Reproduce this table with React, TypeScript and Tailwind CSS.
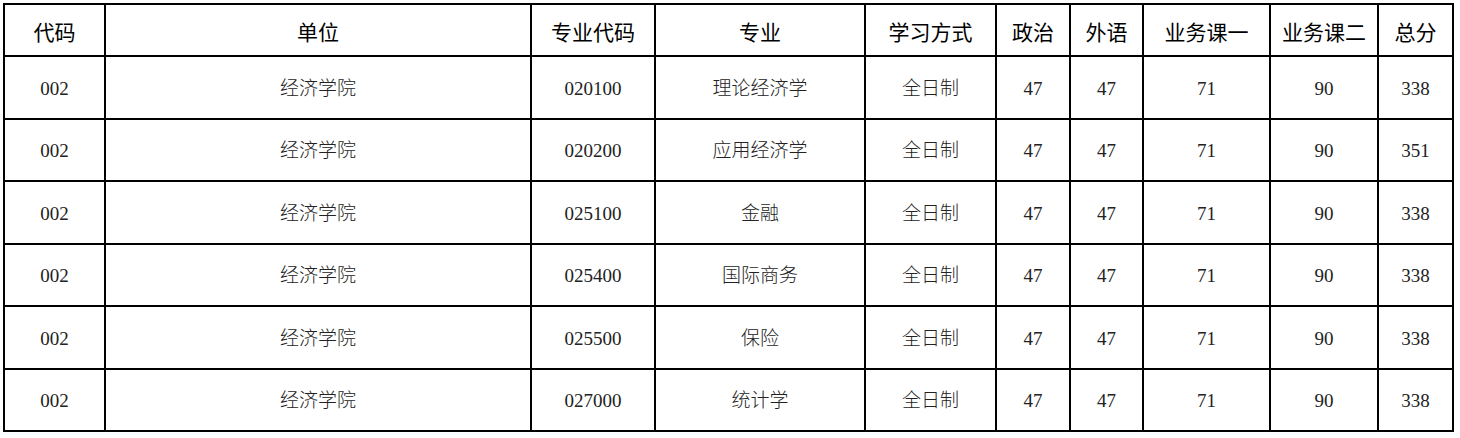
import React from 'react'

// column widths, measured between grid line centres
const cols = [101, 426, 124, 210, 131, 74, 73, 127, 108, 75]

const headers = ['代码', '单位', '专业代码', '专业', '学习方式', '政治', '外语', '业务课一', '业务课二', '总分']

type Row = {
  code: string
  unit: string
  majorCode: string
  major: string
  mode: string
  politics: number
  language: number
  course1: number
  course2: number
  total: number
}

const rows: Row[] = [
  { code: '002', unit: '经济学院', majorCode: '020100', major: '理论经济学', mode: '全日制', politics: 47, language: 47, course1: 71, course2: 90, total: 338 },
  { code: '002', unit: '经济学院', majorCode: '020200', major: '应用经济学', mode: '全日制', politics: 47, language: 47, course1: 71, course2: 90, total: 351 },
  { code: '002', unit: '经济学院', majorCode: '025100', major: '金融', mode: '全日制', politics: 47, language: 47, course1: 71, course2: 90, total: 338 },
  { code: '002', unit: '经济学院', majorCode: '025400', major: '国际商务', mode: '全日制', politics: 47, language: 47, course1: 71, course2: 90, total: 338 },
  { code: '002', unit: '经济学院', majorCode: '025500', major: '保险', mode: '全日制', politics: 47, language: 47, course1: 71, course2: 90, total: 338 },
  { code: '002', unit: '经济学院', majorCode: '027000', major: '统计学', mode: '全日制', politics: 47, language: 47, course1: 71, course2: 90, total: 338 },
]

const rowHeights = ['h-[63px]', 'h-[62px]', 'h-[63px]', 'h-[62px]', 'h-[63px]', 'h-[62px]']

export default function App() {
  return (
    <div className="w-[1460px] h-[438px] bg-white pt-[3px] pl-[3px]">
      <table className="w-[1451px] table-fixed border-collapse text-black">
        <colgroup>
          {cols.map((w, i) => (
            <col key={i} style={{ width: w }} />
          ))}
        </colgroup>
        <thead>
          <tr className="h-[52px]">
            {headers.map((h) => (
              <th
                key={h}
                className="border-2 border-black p-0 pt-[3px] text-center align-middle text-[21px] font-normal font-['Noto_Sans_CJK_SC',sans-serif]"
              >
                {h}
              </th>
            ))}
          </tr>
        </thead>
        <tbody>
          {rows.map((r, i) => {
            const cells = [r.code, r.unit, r.majorCode, r.major, r.mode, r.politics, r.language, r.course1, r.course2, r.total]
            return (
              <tr key={i} className={rowHeights[i]}>
                {cells.map((c, j) => (
                  <td
                    key={j}
                    className="border-2 border-black p-0 pt-[3px] text-center align-middle text-[19px] font-light text-[#222] font-['Liberation_Serif','Noto_Sans_CJK_SC',serif]"
                  >
                    {c}
                  </td>
                ))}
              </tr>
            )
          })}
        </tbody>
      </table>
    </div>
  )
}
